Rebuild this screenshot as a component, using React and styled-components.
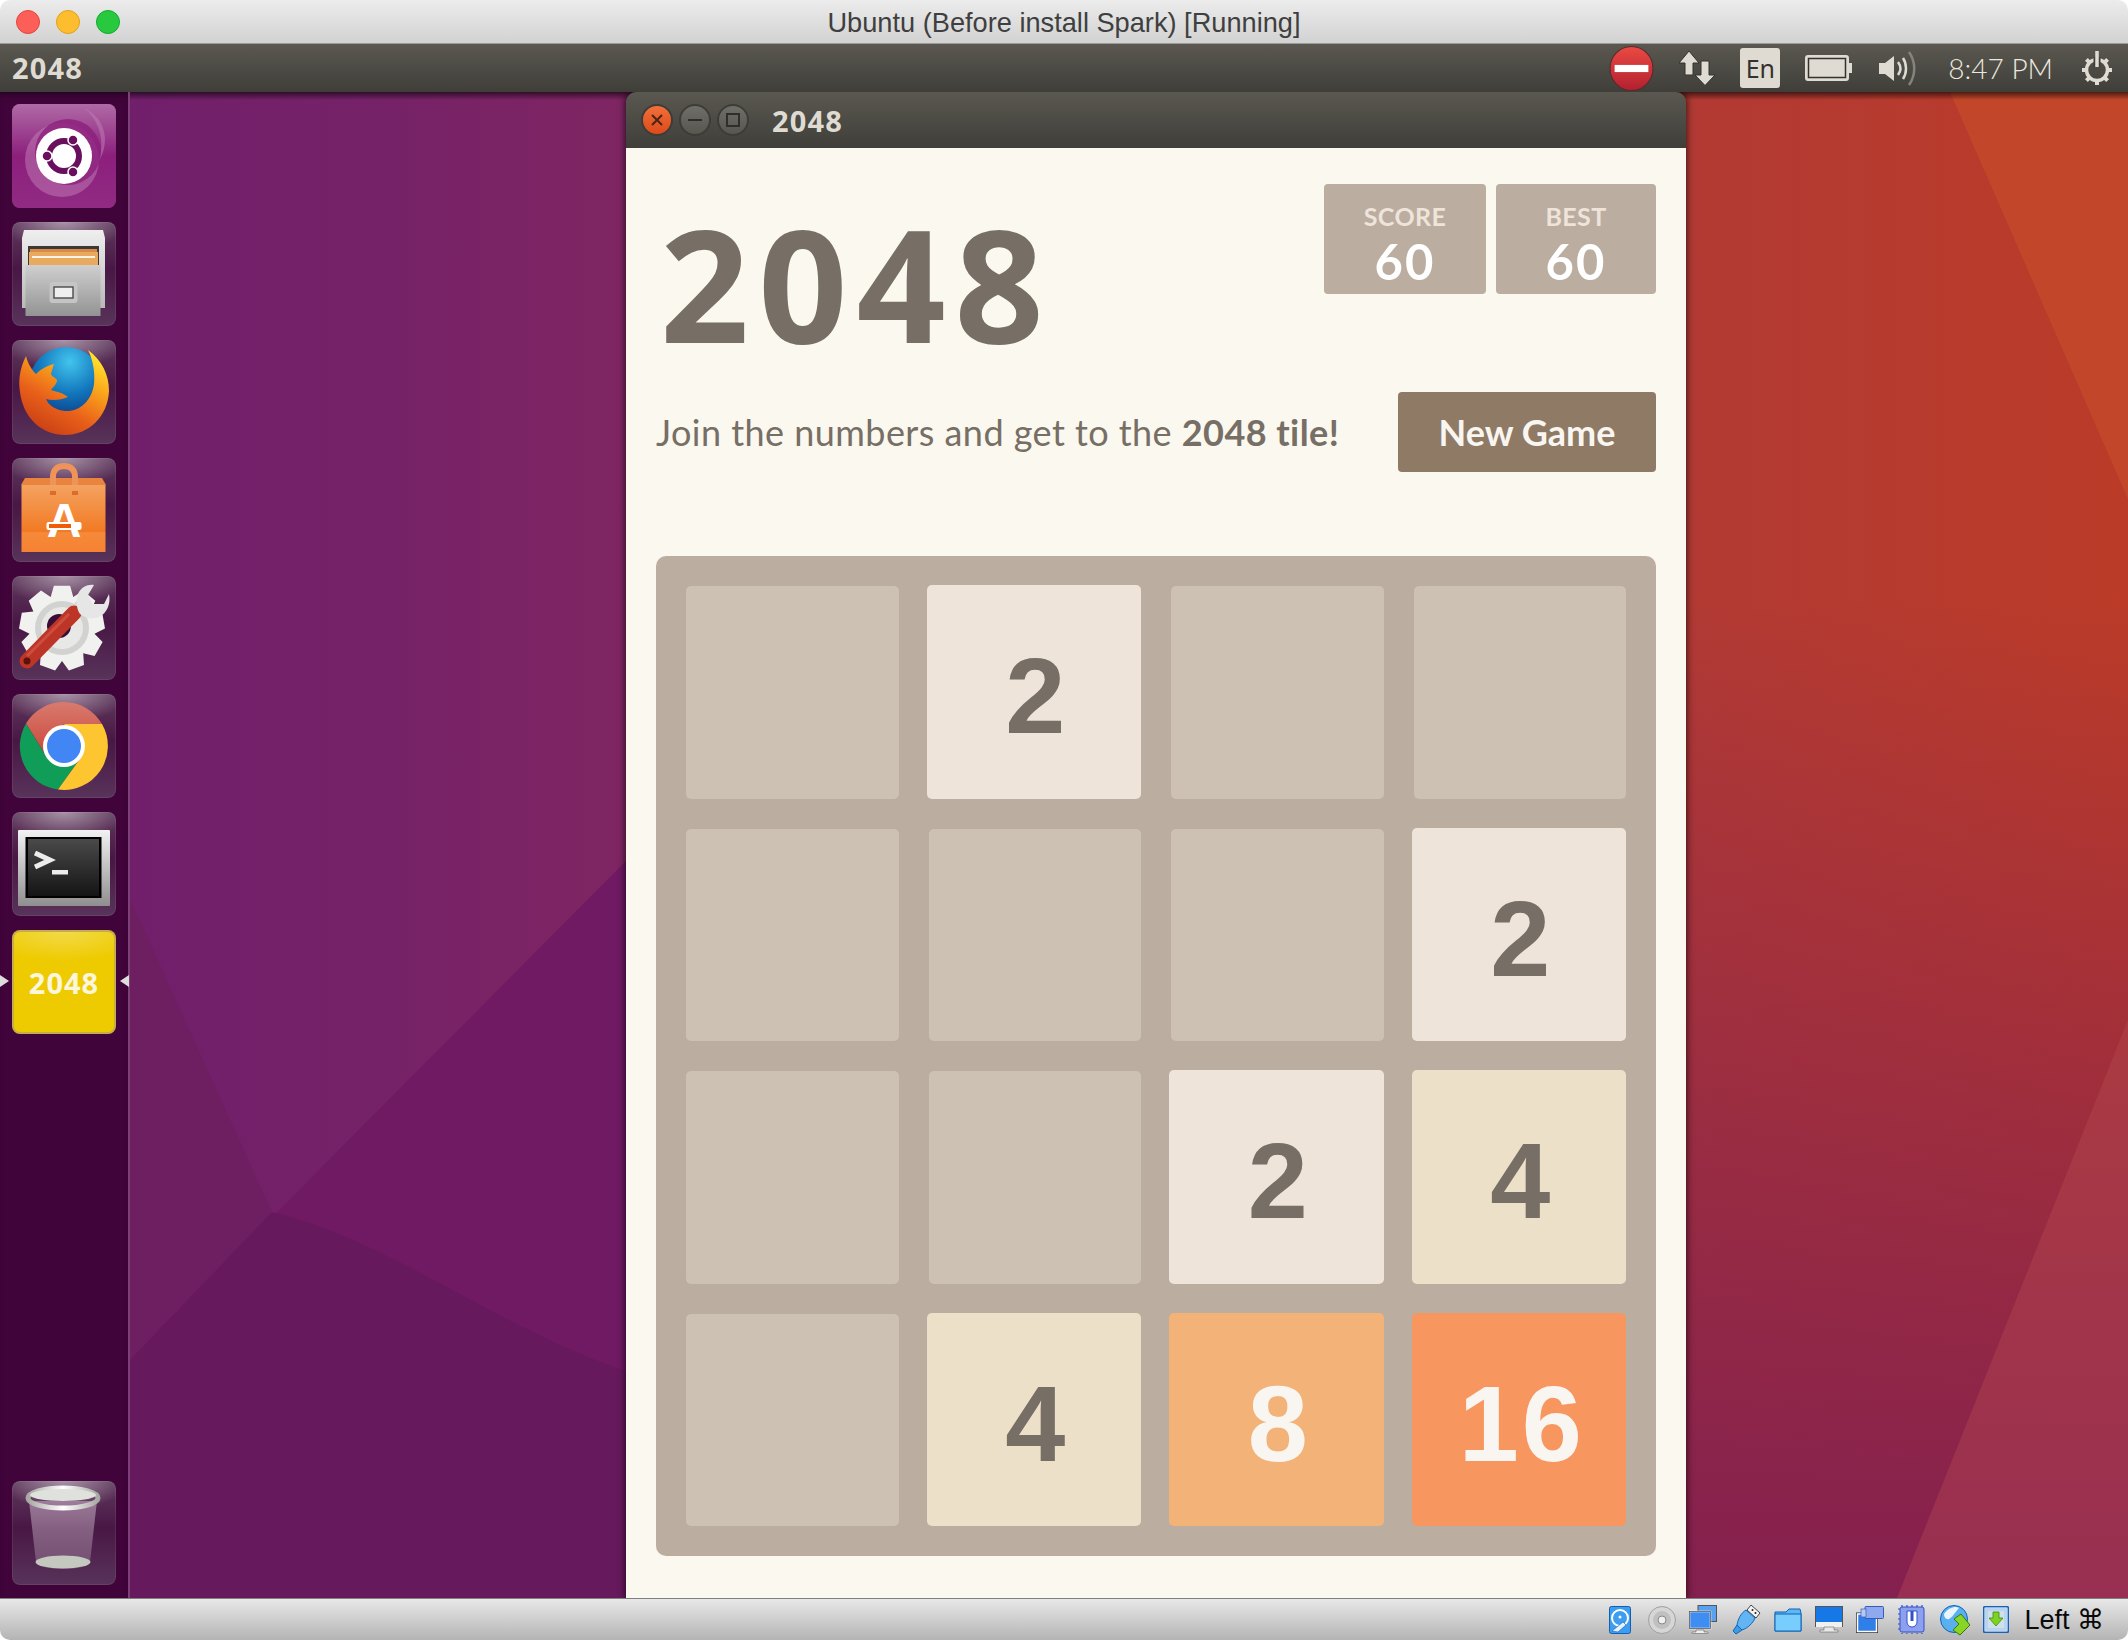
import styled, { createGlobalStyle } from "styled-components";

const GlobalStyle = createGlobalStyle`
  html, body {
    margin: 0;
    padding: 0;
    background: #ffffff;
  }
  * {
    box-sizing: border-box;
  }
`;

const uiFont = `"Noto Sans", "Open Sans", sans-serif`;

const Frame = styled.div`
  width: 2128px;
  height: 1640px;
  display: flex;
  flex-direction: column;
  border-radius: 10px;
  overflow: hidden;
`;

const MacTitleBar = styled.div`
  position: relative;
  height: 44px;
  flex: none;
  display: flex;
  align-items: center;
  justify-content: center;
  padding-top: 2px;
  background: linear-gradient(#ececec, #d2d2d2);
  border-bottom: 1px solid #9b9b96;
`;

const TrafficLights = styled.div`
  position: absolute;
  left: 16px;
  top: 10px;
  display: flex;
  gap: 16px;
`;

const TrafficLight = styled.span`
  width: 24px;
  height: 24px;
  border-radius: 50%;
  background: ${(p) => p.$color};
  border: 1px solid ${(p) => p.$edge};
`;

const MacTitle = styled.div`
  font: 27.2px "Liberation Sans", Arial, sans-serif;
  color: #3f3f3f;
`;

const MenuBar = styled.div`
  height: 48px;
  flex: none;
  display: flex;
  align-items: center;
  justify-content: space-between;
  padding: 0 14px 0 12px;
  background: linear-gradient(#5a5850, #3f3e39);
`;

const AppName = styled.div`
  font: 700 29px/1 ${uiFont};
  letter-spacing: 1.2px;
  color: #dfdbd2;
  margin-top: -2px;
`;

const Tray = styled.div`
  display: flex;
  align-items: center;
  gap: 25px;
`;

const LangBadge = styled.div`
  width: 40px;
  height: 40px;
  border-radius: 3px;
  background: #dfdbd2;
  color: #33322e;
  display: flex;
  align-items: center;
  justify-content: center;
  font: 25px ${uiFont};
`;

const Clock = styled.div`
  font: 300 28px Lato, sans-serif;
  color: #ece8df;
  margin: 0 2px 0 7px;
  white-space: nowrap;
`;

const Main = styled.div`
  flex: 1;
  min-height: 0;
  display: flex;
`;

const Launcher = styled.div`
  width: 130px;
  flex: none;
  display: flex;
  flex-direction: column;
  gap: 14px;
  padding: 12px 0 13px 12px;
  background: #40043b;
  border-right: 2px solid #7d4178;
  box-shadow: inset 0 6px 6px -4px rgba(0, 0, 0, 0.5);
`;

const LauncherTile = styled.div`
  position: relative;
  width: 104px;
  height: 104px;
  flex: none;
  border-radius: 8px;
  margin-top: ${(p) => (p.$bottom ? "auto" : "0")};
  background: radial-gradient(ellipse 60% 28% at 50% 0, rgba(255, 255, 255, 0.45), transparent),
    linear-gradient(#5f3a5d, #491745 45%, #58335a);
  box-shadow: inset 0 0 0 1px rgba(255, 255, 255, 0.08);
  svg {
    display: block;
  }
`;

const GameTile = styled(LauncherTile)`
  display: flex;
  align-items: center;
  justify-content: center;
  color: #fbf6dc;
  font: 700 29px ${uiFont};
  letter-spacing: 1px;
  background: radial-gradient(ellipse 80% 30% at 50% 0, rgba(255, 255, 255, 0.3), transparent), #eecb00;
  box-shadow: inset 0 0 0 2px #c6ad4c;
`;

const ActiveArrow = styled.span`
  position: absolute;
  top: 45px;
  ${(p) => (p.$side === "left" ? "left: -12px;" : "right: -13px;")}
  border-top: 6px solid transparent;
  border-bottom: 6px solid transparent;
  ${(p) => (p.$side === "left" ? "border-left: 9px solid #ddd;" : "border-right: 9px solid #ddd;")}
`;

const Desktop = styled.div`
  position: relative;
  flex: 1;
  min-width: 0;
  display: flex;
  padding-left: 496px;
  overflow: hidden;
`;

const Wallpaper = styled.svg`
  position: absolute;
  inset: 0;
  width: 100%;
  height: 100%;
`;

const Window = styled.div`
  position: relative;
  width: 1060px;
  display: flex;
  flex-direction: column;
  border-radius: 10px 10px 0 0;
  overflow: hidden;
  box-shadow: 0 0 7px 1px rgba(0, 0, 0, 0.65);
`;

const WindowBar = styled.div`
  height: 56px;
  flex: none;
  display: flex;
  align-items: center;
  padding-left: 15px;
  gap: 6px;
  background: linear-gradient(#5a5850, #3f3e39);
`;

const WindowTitle = styled.div`
  margin: 1px 0 0 17px;
  font: 700 29px/1 ${uiFont};
  letter-spacing: 1.2px;
  color: #dfdbd2;
`;

const WinButton = styled.span`
  width: 32px;
  height: 32px;
  border-radius: 50%;
  display: flex;
  align-items: center;
  justify-content: center;
  background: ${(p) => (p.$close ? "linear-gradient(#f2703a, #dc4a1a)" : "linear-gradient(#6f6e68, #57564f)")};
  border: 2px solid #3d3c37;
`;

const GamePage = styled.div`
  flex: 1;
  background: #faf8ef;
  padding: 36px 30px 0;
`;

const Header = styled.div`
  height: 208px;
  display: flex;
  justify-content: space-between;
  align-items: flex-start;
`;

const BigTitle = styled.h1`
  margin: 5px 0 0 4px;
  font: 700 156px/1.2 "Open Sans", sans-serif;
  letter-spacing: 9px;
  color: #776e65;
`;

const Scores = styled.div`
  display: flex;
  gap: 10px;
`;

const ScoreBox = styled.div`
  width: ${(p) => p.$w}px;
  height: 110px;
  border-radius: 4px;
  background: #bbada0;
  display: flex;
  flex-direction: column;
  align-items: center;
  padding-top: 17px;
`;

const ScoreLabel = styled.div`
  font: 700 25px/30px Lato, sans-serif;
  letter-spacing: 0.4px;
  color: #eee4da;
`;

const ScoreValue = styled.div`
  margin-top: 4px;
  font: 700 49px/52px Lato, sans-serif;
  letter-spacing: 2px;
  color: #ffffff;
`;

const Intro = styled.div`
  height: 80px;
  display: flex;
  align-items: center;
  justify-content: space-between;
`;

const IntroText = styled.p`
  margin: 0;
  font: 36px Lato, sans-serif;
  letter-spacing: 0.45px;
  color: #776e65;
  b {
    font-weight: 700;
  }
`;

const NewGame = styled.div`
  width: 258px;
  height: 80px;
  border-radius: 4px;
  background: #8f7a66;
  color: #f9f6f2;
  display: flex;
  align-items: center;
  justify-content: center;
  font: 700 36px Lato, sans-serif;
`;

const Board = styled.div`
  margin-top: 84px;
  width: 1000px;
  height: 1000px;
  padding: 30px;
  border-radius: 10px;
  background: #bbada0;
  display: grid;
  grid-template-columns: repeat(4, 1fr);
  grid-auto-rows: 212.5px;
  gap: 30px;
`;

const tileColors = {
  0: "#cdc1b4",
  2: "#eee4da",
  4: "#ede0c8",
  8: "#f3b277",
  16: "#f89660",
};

const Tile = styled.div`
  border-radius: 5px;
  margin: ${(p) => (p.$value > 0 ? "-1px 0 0 -2px" : "0")};
  background: ${(p) => tileColors[p.$value]};
  color: ${(p) => (p.$value > 4 ? "#f9f6f2" : "#776e65")};
  display: flex;
  align-items: center;
  justify-content: center;
  padding: 8px 0 0 6px;
  letter-spacing: 3px;
  font: 700 108px "Liberation Sans", Arial, sans-serif;
`;

const StatusBar = styled.div`
  height: 42px;
  flex: none;
  display: flex;
  align-items: center;
  justify-content: flex-end;
  gap: 13px;
  padding-right: 24px;
  background: linear-gradient(#e8e8e8, #b4b4b4);
  border-top: 1px solid #808080;
`;

const HostKey = styled.div`
  margin-left: 2px;
  font: 27px "Liberation Sans", "DejaVu Sans", sans-serif;
  color: #0a0a0a;
  white-space: nowrap;
`;

const gearPath = (cx, cy, R, r, teeth) => {
  const pts = [];
  const step = (Math.PI * 2) / teeth;
  for (let i = 0; i < teeth; i++) {
    const a = i * step - Math.PI / 2;
    [
      [r, -0.5],
      [R, -0.27],
      [R, 0.27],
      [r, 0.5],
    ].forEach(([rad, off]) => {
      const t = a + off * step;
      pts.push(`${(cx + rad * Math.cos(t)).toFixed(1)} ${(cy + rad * Math.sin(t)).toFixed(1)}`);
    });
  }
  return `M${pts.join("L")}Z`;
};

const TileIcon = ({ children }) => (
  <svg width="104" height="104" viewBox="0 0 104 104">
    {children}
  </svg>
);

const UbuntuIcon = () => (
  <TileIcon>
    <defs>
      <linearGradient id="ubBg" x1="0" y1="0" x2="0" y2="1">
        <stop offset="0" stopColor="#b06aa6" />
        <stop offset="0.5" stopColor="#8c1f7c" />
        <stop offset="1" stopColor="#912b83" />
      </linearGradient>
    </defs>
    <rect width="104" height="104" rx="8" fill="url(#ubBg)" />
    <path d="M72 4C90 18 94 44 84 62C100 40 94 14 72 4Z" fill="#c27fb8" opacity="0.5" />
    <circle cx="50" cy="56" r="37" fill="#c27fb8" opacity="0.5" />
    <circle cx="56" cy="48" r="33" fill="#8c1f7c" opacity="0.8" />
    <circle cx="52" cy="52" r="28" fill="#ffffff" />
    <circle cx="52" cy="52" r="15" fill="none" stroke="#6a0f5e" strokeWidth="6" />
    <circle cx="35" cy="52" r="5" fill="#6a0f5e" stroke="#fff" strokeWidth="1.5" />
    <circle cx="61" cy="36" r="5" fill="#6a0f5e" stroke="#fff" strokeWidth="1.5" />
    <circle cx="61" cy="68" r="5" fill="#6a0f5e" stroke="#fff" strokeWidth="1.5" />
  </TileIcon>
);

const FilesIcon = () => (
  <TileIcon>
    <defs>
      <linearGradient id="cabTop" x1="0" y1="0" x2="0" y2="1">
        <stop offset="0" stopColor="#efefef" />
        <stop offset="1" stopColor="#b9b9b9" />
      </linearGradient>
      <linearGradient id="cabFront" x1="0" y1="0" x2="0" y2="1">
        <stop offset="0" stopColor="#cfcfcf" />
        <stop offset="1" stopColor="#939393" />
      </linearGradient>
    </defs>
    <path d="M12 8h79l2 8v70H10V16z" fill="url(#cabTop)" />
    <rect x="16" y="24" width="71" height="20" fill="#3b3836" />
    <rect x="18" y="27" width="67" height="5" fill="#d98a4a" />
    <rect x="17" y="30" width="69" height="14" fill="#e9aa5f" />
    <rect x="20" y="34" width="63" height="2" fill="#fff3e3" />
    <rect x="13.5" y="43" width="75" height="51" fill="url(#cabFront)" />
    <rect x="37.5" y="60" width="28" height="21" rx="3" fill="#c5c5c5" />
    <rect x="42" y="65" width="19" height="11" fill="#eeeeee" stroke="#4a4a4a" strokeWidth="1.4" />
  </TileIcon>
);

const FirefoxIcon = () => (
  <TileIcon>
    <defs>
      <radialGradient id="ffBlue" cx="0.55" cy="0.2" r="0.85">
        <stop offset="0" stopColor="#43c4ee" />
        <stop offset="0.5" stopColor="#1277bd" />
        <stop offset="1" stopColor="#0b2f77" />
      </radialGradient>
      <linearGradient id="ffFox" x1="0.85" y1="0.1" x2="0.3" y2="1">
        <stop offset="0" stopColor="#ffdf2a" />
        <stop offset="0.3" stopColor="#f9a31c" />
        <stop offset="0.65" stopColor="#e9601a" />
        <stop offset="1" stopColor="#c93f14" />
      </linearGradient>
    </defs>
    <circle cx="54" cy="44" r="37" fill="url(#ffBlue)" />
    <path
      d="M14 16C8 28 6 40 8 52C11 78 30 95 53 95C77 95 96 76 97 51C97 35 90 20 76 10C81 20 83 32 82 44C80 60 68 72 53 71C44 70 37 66 34 59C40 61 49 60 56 57C51 53 46 52 39 50C42 46 45 44 45 40C43 37 40 37 39 34C40 30 41 27 42 24C34 26 28 30 24 34C20 30 16 24 14 16Z"
      fill="url(#ffFox)"
    />
  </TileIcon>
);

const StoreIcon = () => (
  <TileIcon>
    <defs>
      <linearGradient id="bag" x1="0" y1="0" x2="0" y2="1">
        <stop offset="0" stopColor="#f4a261" />
        <stop offset="0.7" stopColor="#f27a22" />
        <stop offset="0.71" stopColor="#f58a3a" />
        <stop offset="1" stopColor="#f58232" />
      </linearGradient>
    </defs>
    <path d="M13 20h77l4 7H9z" fill="#e9843f" />
    <path d="M41 35V19c0-7 4-11 11-11s11 4 11 11v16" fill="none" stroke="#f0935a" strokeWidth="6" />
    <rect x="9.5" y="27" width="84" height="67" fill="url(#bag)" />
    <path d="M38 35h6M60 35h6" stroke="#d96d2c" strokeWidth="4" />
    <text x="52" y="79" textAnchor="middle" fontFamily="Liberation Sans" fontWeight="700" fontSize="48" fill="#ffffff">
      A
    </text>
    <rect x="34.5" y="64" width="35" height="8" rx="2" fill="#ffffff" />
    <rect x="37" y="66" width="22" height="4" fill="#ee5c06" />
  </TileIcon>
);

const SettingsIcon = () => (
  <TileIcon>
    <path d={gearPath(50, 52, 43, 33, 9)} fill="#f1f1ef" />
    <circle cx="50" cy="52" r="27" fill="#d2d2d0" />
    <circle cx="50" cy="52" r="21" fill="#e8e8e6" />
    <circle cx="47" cy="50" r="12" fill="#3a0d36" />
    <path d="M62 36L72 26" stroke="#d9d9d9" strokeWidth="12" />
    <path d="M15 85L62 37" stroke="#bd3526" strokeWidth="15" strokeLinecap="round" />
    <path d="M15 80L57 38" stroke="#d9604e" strokeWidth="3" opacity="0.6" />
    <circle cx="15" cy="85" r="3.500" fill="#5b120c" />
    <path d="M66 18C69 11 76 8 82 9L76 19L81 28L92 28L97 18C99 28 95 37 87 41C80 44 73 42 68 38C64 32 64 24 66 18Z" fill="#e6e6e6" />
  </TileIcon>
);

const ChromeIcon = () => (
  <TileIcon>
    <defs>
      <linearGradient id="chRed" x1="0" y1="0" x2="0" y2="1">
        <stop offset="0" stopColor="#d97a6e" />
        <stop offset="1" stopColor="#c9473a" />
      </linearGradient>
    </defs>
    <path d="M14 29.500A44 44 0 0 1 90 30L52 30L34 62Z" fill="url(#chRed)" />
    <path d="M14 29.500A44 44 0 0 0 46 95.600L70 62L34 62Z" fill="#0f9d58" />
    <path d="M90 30A44 44 0 0 1 46 95.600L70 62L52 30Z" fill="#fdc52f" />
    <circle cx="52" cy="52" r="21" fill="#ffffff" />
    <circle cx="52" cy="52" r="17" fill="#4285f4" />
  </TileIcon>
);

const TerminalIcon = () => (
  <TileIcon>
    <defs>
      <linearGradient id="termFrame" x1="0" y1="0" x2="0" y2="1">
        <stop offset="0" stopColor="#f2f2f2" />
        <stop offset="1" stopColor="#8f8f8f" />
      </linearGradient>
      <linearGradient id="termScreen" x1="0" y1="0" x2="0" y2="1">
        <stop offset="0" stopColor="#4a4a4a" />
        <stop offset="1" stopColor="#141414" />
      </linearGradient>
    </defs>
    <rect x="6" y="18" width="92" height="76" rx="1" fill="url(#termFrame)" />
    <rect x="13.500" y="25" width="76" height="61" fill="#000" />
    <rect x="16" y="27" width="71" height="57" fill="url(#termScreen)" />
    <path d="M23 41l15 7-15 7" fill="none" stroke="#ececec" strokeWidth="5" />
    <rect x="40" y="58" width="16" height="4.500" fill="#ececec" />
  </TileIcon>
);

const TrashIcon = () => (
  <TileIcon>
    <defs>
      <linearGradient id="trashBody" x1="0" y1="0" x2="0" y2="1">
        <stop offset="0" stopColor="#ab8ba8" stopOpacity="0.8" />
        <stop offset="1" stopColor="#8d6d8b" stopOpacity="0.55" />
      </linearGradient>
      <linearGradient id="trashRim" x1="0" y1="0" x2="1" y2="0">
        <stop offset="0" stopColor="#a8a8a4" />
        <stop offset="0.5" stopColor="#ffffff" />
        <stop offset="1" stopColor="#a8a8a4" />
      </linearGradient>
    </defs>
    <path d="M17 20L24 81a27 7 0 0 0 54 0L85 20z" fill="url(#trashBody)" />
    <ellipse cx="51" cy="81" rx="27.500" ry="6.500" fill="#c4c8bf" />
    <ellipse cx="51" cy="17" rx="35" ry="10" fill="none" stroke="url(#trashRim)" strokeWidth="5" />
    <ellipse cx="51" cy="14" rx="33" ry="6" fill="#dfe1dc" />
  </TileIcon>
);

const NoEntryIcon = () => (
  <svg width="45" height="45" viewBox="0 0 43 44">
    <defs>
      <linearGradient id="noEntry" x1="0" y1="0" x2="0" y2="1">
        <stop offset="0" stopColor="#ea4a42" />
        <stop offset="1" stopColor="#b2202f" />
      </linearGradient>
    </defs>
    <ellipse cx="21.500" cy="22" rx="21" ry="21.500" fill="url(#noEntry)" stroke="#5a2a2a" strokeWidth="1" />
    <rect x="5" y="18.500" width="33" height="7" fill="#ffffff" />
  </svg>
);

const ArrowsIcon = () => (
  <svg width="36" height="36" viewBox="0 0 36 36">
    <path
      d="M10 1L0 13h6v12h8V13h6zM22 11v14h-6l10 10.500L36 25h-6V11z"
      fill="#dfdbd2"
      stroke="#33322e"
      strokeWidth="1"
    />
  </svg>
);

const BatteryIcon = () => (
  <svg width="48" height="26" viewBox="0 0 48 26">
    <rect x="1" y="1" width="42" height="24" rx="2" fill="#dfdbd2" stroke="#dfdbd2" strokeWidth="2" />
    <rect x="3.500" y="3.500" width="37" height="19" fill="#dfdbd2" stroke="#33322e" strokeWidth="1.500" />
    <rect x="44" y="8" width="3" height="10" fill="#dfdbd2" />
  </svg>
);

const VolumeIcon = () => (
  <svg width="38" height="36" viewBox="0 0 38 36">
    <path d="M1 13h6l9-7v25l-9-7H1z" fill="#dfdbd2" />
    <path d="M20 12c3 4 3 9 0 13" fill="none" stroke="#dfdbd2" strokeWidth="2.500" />
    <path d="M25 8c4 6 4 15 0 21" fill="none" stroke="#dfdbd2" strokeWidth="2.500" />
    <path d="M31 2c7 10 7 23 0 33" fill="none" stroke="#85837c" strokeWidth="2.500" />
  </svg>
);

const PowerGearIcon = () => (
  <svg width="34" height="36" viewBox="0 0 34 36">
    <circle cx="17" cy="20" r="10.500" fill="none" stroke="#dfdbd2" strokeWidth="3.500" />
    <path
      d="M2 20h5M27 20h5M6.400 9.400l3.500 3.500M27.600 9.400l-3.500 3.500M6.400 30.600l3.500-3.500M27.600 30.600l-3.500-3.500M17 30v5"
      stroke="#dfdbd2"
      strokeWidth="4"
    />
    <path d="M17 7v10" stroke="#3f3e39" strokeWidth="7" />
    <path d="M17 1v16" stroke="#dfdbd2" strokeWidth="3.500" />
  </svg>
);

const DiskStatus = () => (
  <svg width="26" height="28" viewBox="0 0 26 28">
    <rect x="0.500" y="0.500" width="21" height="27" rx="2" fill="#3d9df0" stroke="#0f5fb4" />
    <circle cx="11" cy="12" r="8" fill="none" stroke="#ffffff" strokeWidth="2" />
    <circle cx="11" cy="11" r="1.500" fill="#ffffff" />
    <path d="M3 25l11-9 3 3-8 7z" fill="#e6f3ff" stroke="#0f5fb4" strokeWidth="0.600" />
  </svg>
);

const CdStatus = () => (
  <svg width="28" height="28" viewBox="0 0 28 28">
    <circle cx="14" cy="14" r="13.500" fill="#d6d6d6" stroke="#a0a0a0" />
    <circle cx="14" cy="14" r="9" fill="#c0c0c0" />
    <circle cx="14" cy="14" r="4" fill="#f0f0f0" stroke="#888" />
  </svg>
);

const NetworkStatus = () => (
  <svg width="28" height="29" viewBox="0 0 28 29">
    <rect x="9" y="0.500" width="18.500" height="16" fill="#5aa2f0" stroke="#555" />
    <rect x="0.500" y="6.500" width="21" height="17" fill="#3f8df0" stroke="#fff" strokeWidth="1.500" />
    <rect x="0.500" y="6.500" width="21" height="17" fill="none" stroke="#555" strokeWidth="0.800" />
    <path d="M7 25h8v2h4v1.500H3V27h4z" fill="#eee" stroke="#666" strokeWidth="0.600" />
  </svg>
);

const UsbStatus = () => (
  <svg width="31" height="31" viewBox="0 0 31 31">
    <path d="M21 1l9 8-4 5-9-8z" fill="#f4f4f4" stroke="#444" />
    <circle cx="22.500" cy="6" r="1" fill="#222" />
    <circle cx="25.500" cy="9" r="1" fill="#222" />
    <path d="M16 6l9 8c-2 5-7 10-13 12l-5-5c1-6 4-12 9-15z" fill="#62b5f2" stroke="#1266b4" />
    <path d="M7 21l5 5-6 4-3-3z" fill="#3c9ae6" stroke="#1266b4" />
  </svg>
);

const FolderStatus = () => (
  <svg width="28" height="24" viewBox="0 0 28 24">
    <path d="M1 4h11l3-3h11l1 4v18H1z" fill="#5cb8f4" stroke="#0f63b8" />
    <path d="M1 6h26v17H1z" fill="#77cdfb" stroke="#0f63b8" />
  </svg>
);

const DisplayStatus = () => (
  <svg width="28" height="28" viewBox="0 0 28 28">
    <rect x="0.500" y="0.500" width="27" height="20" fill="#1677e6" stroke="#555" />
    <rect x="1" y="16" width="26" height="5" fill="#f0f0f0" />
    <path d="M9 21h10v3h4v2H5v-2h4z" fill="#e8e8e8" stroke="#666" strokeWidth="0.600" />
  </svg>
);

const CopyStatus = () => (
  <svg width="28" height="27" viewBox="0 0 28 27">
    <rect x="0.500" y="7" width="21" height="19.500" fill="#2f7fe8" stroke="#333" />
    <rect x="1.500" y="8" width="19" height="17.500" fill="none" stroke="#ffffff" strokeWidth="1.500" />
    <rect x="9" y="0.500" width="18.500" height="12" rx="1" fill="#8fa9ee" stroke="#3a5ab8" />
    <rect x="5" y="3" width="5" height="8" fill="#b8c8f4" stroke="#3a5ab8" strokeWidth="0.700" />
  </svg>
);

const CpuStatus = () => (
  <svg width="30" height="31" viewBox="0 0 30 31">
    <path d="M1 5h28M1 10h28M1 15h28M1 20h28M1 25h28M5 1v29M10 1v29M15 1v29M20 1v29M25 1v29" stroke="#3250c8" strokeDasharray="2 2" strokeWidth="1.200" />
    <rect x="3" y="3" width="24" height="25" rx="2" fill="#8da0ee" stroke="#3250c8" />
    <path d="M10 7h10v11a5 5 0 0 1-10 0z" fill="#ffffff" stroke="#3250c8" />
    <rect x="13.500" y="7" width="3" height="10" fill="#3250c8" />
  </svg>
);

const GlobeStatus = () => (
  <svg width="30" height="32" viewBox="0 0 30 32">
    <circle cx="14" cy="15" r="13.500" fill="#5ab0ee" stroke="#0f63b8" />
    <path d="M4 10c5-7 12-8 15-6-4 4-6 9-10 11-3 1-5-2-5-5z" fill="#e8f5ff" />
    <path d="M14 15l7-5 9 11-10 10-7-5 6-6z" fill="#8ad524" stroke="#2f7a12" />
  </svg>
);

const DownloadStatus = () => (
  <svg width="26" height="27" viewBox="0 0 26 27">
    <rect x="0.500" y="0.500" width="25" height="26" rx="2" fill="#b9d4f0" stroke="#1a62b4" strokeWidth="1.500" />
    <rect x="5" y="5" width="16" height="17" fill="#cfe0ea" />
    <path d="M10 6h6v6h4l-7 8-7-8h4z" fill="#7ed321" stroke="#3c8a12" strokeWidth="0.800" />
  </svg>
);

const board = [
  [0, 2, 0, 0],
  [0, 0, 0, 2],
  [0, 0, 2, 4],
  [0, 4, 8, 16],
];

const WallpaperArt = () => (
  <Wallpaper viewBox="130 92 1998 1506" preserveAspectRatio="none">
    <defs>
      <linearGradient id="wpBase" x1="130" y1="0" x2="2128" y2="0" gradientUnits="userSpaceOnUse">
        <stop offset="0" stopColor="#711f6b" />
        <stop offset="0.13" stopColor="#762268" />
        <stop offset="0.25" stopColor="#7f2562" />
        <stop offset="0.78" stopColor="#b23a34" />
        <stop offset="1" stopColor="#bb3b28" />
      </linearGradient>
      <linearGradient id="wpFade" x1="0" y1="600" x2="0" y2="1598" gradientUnits="userSpaceOnUse">
        <stop offset="0" stopColor="#84204f" stopOpacity="0" />
        <stop offset="1" stopColor="#84204f" stopOpacity="1" />
      </linearGradient>
      <linearGradient id="wpCorner" x1="0" y1="1020" x2="0" y2="1598" gradientUnits="userSpaceOnUse">
        <stop offset="0" stopColor="#ab3a41" />
        <stop offset="1" stopColor="#982f52" />
      </linearGradient>
      <linearGradient id="wpTop" x1="0" y1="92" x2="0" y2="100" gradientUnits="userSpaceOnUse">
        <stop offset="0" stopColor="#000" stopOpacity="0.6" />
        <stop offset="1" stopColor="#000" stopOpacity="0" />
      </linearGradient>
    </defs>
    <rect x="130" y="92" width="1998" height="1506" fill="url(#wpBase)" />
    <rect x="626" y="600" width="1502" height="998" fill="url(#wpFade)" />
    <path d="M1950 92H2128V499Z" fill="#c2472a" />
    <path d="M2128 1020V1598H1897Z" fill="url(#wpCorner)" />
    <path d="M130 899L272 1212L130 1360Z" fill="#6e1f62" />
    <path d="M130 1360L626 861V1598H130Z" fill="#701a63" />
    <path d="M130 1360L272 1212C390 1240 500 1330 626 1371V1598H130Z" fill="#67195d" />
    <rect x="130" y="92" width="1998" height="8" fill="url(#wpTop)" />
  </Wallpaper>
);

const App = () => (
  <Frame>
    <GlobalStyle />
    <MacTitleBar>
      <TrafficLights>
        <TrafficLight $color="#fc5f57" $edge="#e2463f" />
        <TrafficLight $color="#fdbd2e" $edge="#e1a116" />
        <TrafficLight $color="#28c93f" $edge="#13ab2c" />
      </TrafficLights>
      <MacTitle>Ubuntu (Before install Spark) [Running]</MacTitle>
    </MacTitleBar>
    <MenuBar>
      <AppName>2048</AppName>
      <Tray>
        <NoEntryIcon />
        <ArrowsIcon />
        <LangBadge>En</LangBadge>
        <BatteryIcon />
        <VolumeIcon />
        <Clock>8:47 PM</Clock>
        <PowerGearIcon />
      </Tray>
    </MenuBar>
    <Main>
      <Launcher>
        <LauncherTile>
          <UbuntuIcon />
        </LauncherTile>
        <LauncherTile>
          <FilesIcon />
        </LauncherTile>
        <LauncherTile>
          <FirefoxIcon />
        </LauncherTile>
        <LauncherTile>
          <StoreIcon />
        </LauncherTile>
        <LauncherTile>
          <SettingsIcon />
        </LauncherTile>
        <LauncherTile>
          <ChromeIcon />
        </LauncherTile>
        <LauncherTile>
          <TerminalIcon />
        </LauncherTile>
        <GameTile>
          2048
          <ActiveArrow $side="left" />
          <ActiveArrow $side="right" />
        </GameTile>
        <LauncherTile $bottom>
          <TrashIcon />
        </LauncherTile>
      </Launcher>
      <Desktop>
        <WallpaperArt />
        <Window>
          <WindowBar>
            <WinButton $close>
              <svg width="14" height="14" viewBox="0 0 14 14">
                <path d="M2 2l10 10M12 2L2 12" stroke="#4a2414" strokeWidth="2" />
              </svg>
            </WinButton>
            <WinButton>
              <svg width="14" height="14" viewBox="0 0 14 14">
                <path d="M0 7h14" stroke="#2f2e2a" strokeWidth="2" />
              </svg>
            </WinButton>
            <WinButton>
              <svg width="14" height="14" viewBox="0 0 14 14">
                <rect x="1" y="1" width="12" height="12" fill="none" stroke="#2f2e2a" strokeWidth="2" />
              </svg>
            </WinButton>
            <WindowTitle>2048</WindowTitle>
          </WindowBar>
          <GamePage>
            <Header>
              <BigTitle>2048</BigTitle>
              <Scores>
                <ScoreBox $w={162}>
                  <ScoreLabel>SCORE</ScoreLabel>
                  <ScoreValue>60</ScoreValue>
                </ScoreBox>
                <ScoreBox $w={160}>
                  <ScoreLabel>BEST</ScoreLabel>
                  <ScoreValue>60</ScoreValue>
                </ScoreBox>
              </Scores>
            </Header>
            <Intro>
              <IntroText>
                Join the numbers and get to the <b>2048 tile!</b>
              </IntroText>
              <NewGame>New Game</NewGame>
            </Intro>
            <Board>
              {board.flat().map((value, i) => (
                <Tile key={i} $value={value}>
                  {value > 0 ? value : ""}
                </Tile>
              ))}
            </Board>
          </GamePage>
        </Window>
      </Desktop>
    </Main>
    <StatusBar>
      <DiskStatus />
      <CdStatus />
      <NetworkStatus />
      <UsbStatus />
      <FolderStatus />
      <DisplayStatus />
      <CopyStatus />
      <CpuStatus />
      <GlobeStatus />
      <DownloadStatus />
      <HostKey>Left ⌘</HostKey>
    </StatusBar>
  </Frame>
);

export default App;
